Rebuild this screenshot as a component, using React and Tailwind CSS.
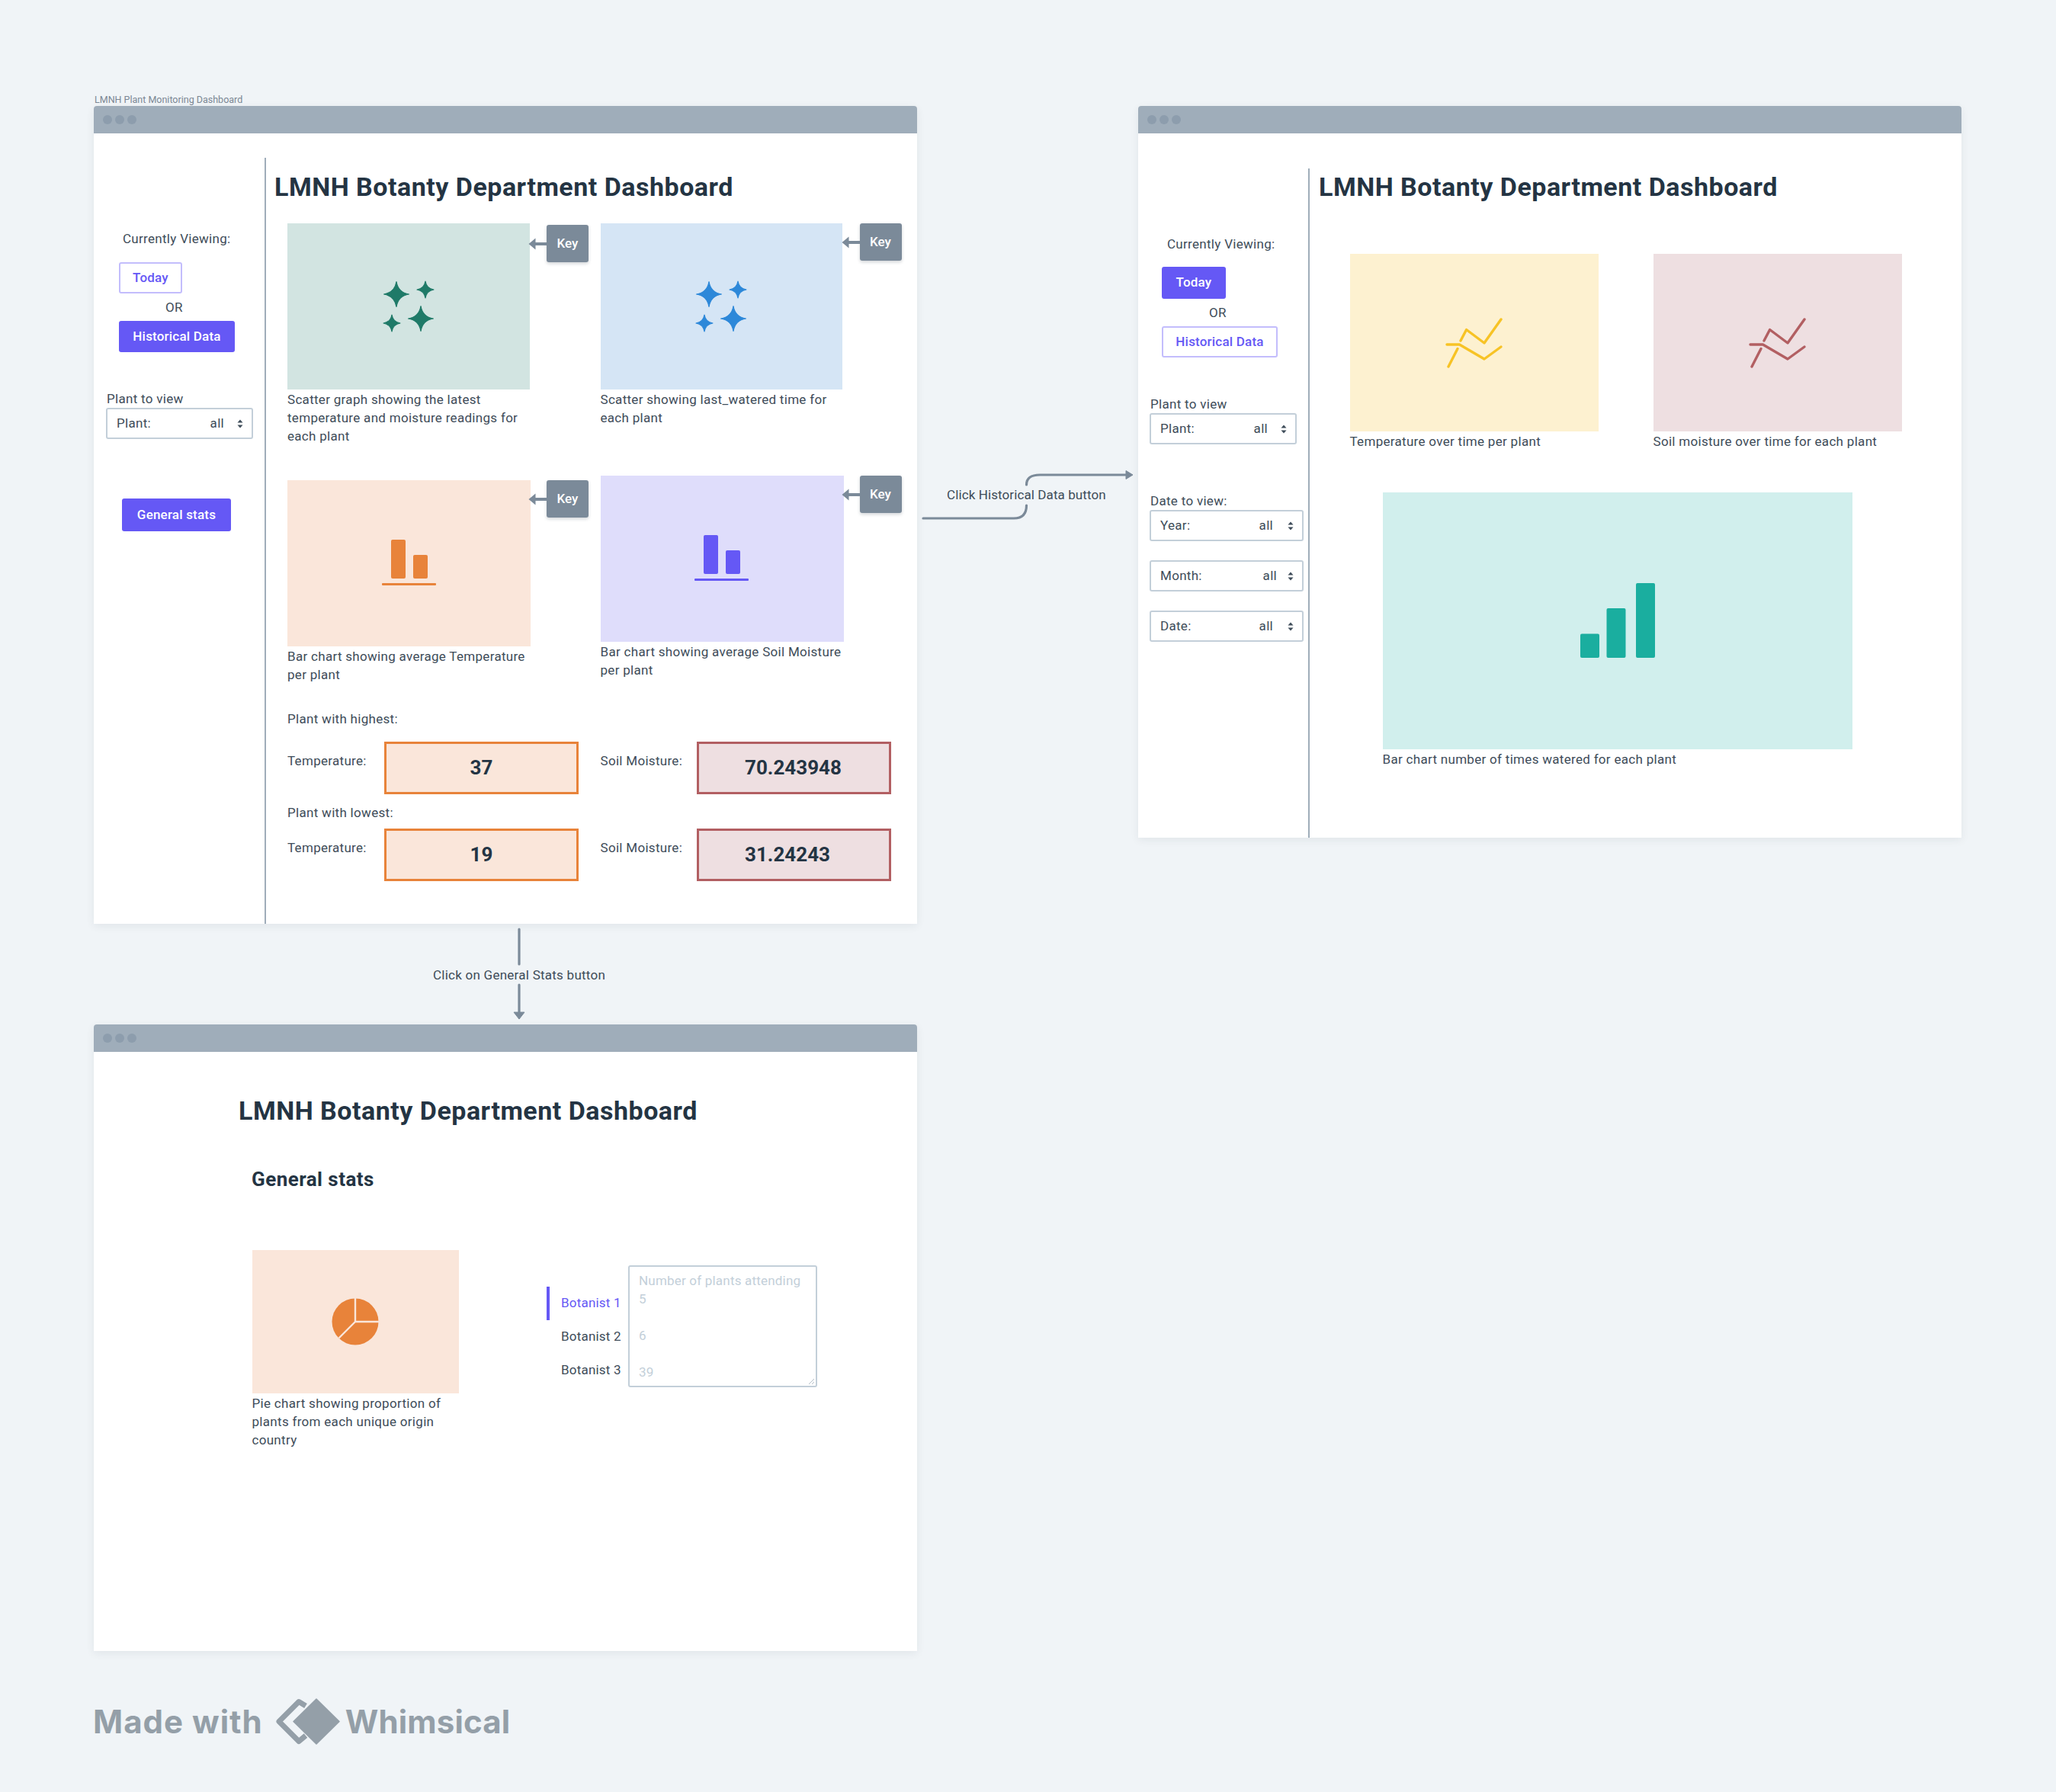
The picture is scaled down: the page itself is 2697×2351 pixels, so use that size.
import React from "react";

const Star = ({ cx, cy, r, fill }) => {
  const k = 0.14 * r;
  return (
    <path
      d={`M${cx} ${cy - r} Q${cx + k} ${cy - k} ${cx + r} ${cy} Q${cx + k} ${cy + k} ${cx} ${cy + r} Q${cx - k} ${cy + k} ${cx - r} ${cy} Q${cx - k} ${cy - k} ${cx} ${cy - r}Z`}
      fill={fill}
      stroke={fill}
      strokeWidth="1.2"
      strokeLinejoin="round"
    />
  );
};

const Sparkles = ({ color }) => (
  <svg width="68" height="68" viewBox="0 0 68 68">
    <Star cx={18} cy={18} r={16.5} fill={color} />
    <Star cx={56} cy={12} r={11} fill={color} />
    <Star cx={12} cy={56} r={11} fill={color} />
    <Star cx={50} cy={50} r={16.5} fill={color} />
  </svg>
);

const Bars2 = ({ color }) => (
  <svg width="72" height="62" viewBox="0 0 72 62">
    <rect x="12" y="0" width="19" height="51" rx="2" fill={color} />
    <rect x="41" y="20" width="19" height="31" rx="2" fill={color} />
    <rect x="0" y="57" width="71" height="3" rx="1" fill={color} />
  </svg>
);

const LineIcon = ({ color }) => (
  <svg width="76" height="66" viewBox="0 0 76 66" fill="none" stroke={color} strokeWidth="3.4" strokeLinecap="round" strokeLinejoin="round" className="mt-[2px]">
    <path d="M4 64L16 40.5" />
    <path d="M20 30L27.6 15.5L51 33L73 2" />
    <path d="M2 35H18.5L51 54L73 38" />
  </svg>
);

const UpDown = () => (
  <svg width="8" height="12" viewBox="0 0 8 12" fill="#3e4c59" className="shrink-0">
    <path d="M4 0.5L7.5 4.5H0.5Z" />
    <path d="M4 11.5L7.5 7.5H0.5Z" />
  </svg>
);

const Select = ({ label, className, gap }) => (
  <div className={`flex h-[41px] items-center rounded-[3px] border-2 border-[#c3cfd9] bg-white pl-[12px] pr-[11px] text-[17px] tracking-[0.3px] text-[#3e4c59] ${className}`}>
    <span>{label}</span>
    <span className={`ml-auto ${gap}`}>all</span>
    <UpDown />
  </div>
);

const Key = ({ className }) => (
  <div className={`relative flex h-[49px] w-[55px] shrink-0 items-center justify-center rounded-[3px] bg-[#7b8a99] text-[17px] font-medium text-white shadow-[0_2px_4px_rgba(31,45,61,0.2)] ${className}`}>
    <svg width="24" height="16" viewBox="0 0 24 16" className="absolute right-full top-[17px]">
      <path d="M24 8H8" stroke="#7b8a99" strokeWidth="4" />
      <path d="M0.5 8L9.5 0.5V15.5Z" fill="#7b8a99" />
    </svg>
    Key
  </div>
);

const Caption = ({ children, className = "" }) => (
  <p className={`text-[17px] leading-[24px] tracking-[0.3px] text-[#3e4c59] ${className}`}>{children}</p>
);

const Title = ({ className }) => (
  <h1 className={`whitespace-nowrap text-[34px] font-bold leading-[40px] tracking-[0.5px] text-[#243443] ${className}`}>
    LMNH Botanty Department Dashboard
  </h1>
);

const Win = ({ className, children }) => (
  <div className={`absolute flex w-[1080px] flex-col rounded-t-[4px] bg-white shadow-[0_3px_12px_rgba(31,45,61,0.07)] ${className}`}>
    <div className="flex h-[36px] shrink-0 items-center gap-[4px] rounded-t-[4px] bg-[#9fadba] pl-[12px]">
      <span className="h-[12px] w-[12px] rounded-full bg-[#8d9dad]" />
      <span className="h-[12px] w-[12px] rounded-full bg-[#8d9dad]" />
      <span className="h-[12px] w-[12px] rounded-full bg-[#8d9dad]" />
    </div>
    {children}
  </div>
);

const Solid = ({ className, children }) => (
  <div className={`flex items-center justify-center rounded-[3px] bg-[#6558f5] text-[17px] font-medium tracking-[0.2px] text-white ${className}`}>{children}</div>
);
const Outline = ({ className, children }) => (
  <div className={`flex items-center justify-center rounded-[3px] border-2 border-[#c3bdfc] bg-white text-[17px] font-medium tracking-[0.2px] text-[#6558f5] ${className}`}>{children}</div>
);

const StatBox = ({ value, className }) => (
  <div className={`flex h-[69px] w-[255px] items-center border-[3px] text-[26px] font-bold text-[#243443] ${className}`}>{value}</div>
);

const StatRow = ({ t, m }) => (
  <div className="grid grid-cols-[410.5px_1fr]">
    <div className="flex">
      <Caption className="w-[126.5px] pt-[13px]">Temperature:</Caption>
      <StatBox value={t} className="border-[#e8833a] bg-[#fae6da] pl-[110px]" />
    </div>
    <div className="flex">
      <Caption className="w-[126.5px] pt-[13px]">Soil Moisture:</Caption>
      <StatBox value={m} className="border-[#b25f62] bg-[#eedfe1] pl-[60px]" />
    </div>
  </div>
);

export default function App() {
  return (
    <div className="relative h-[2351px] w-[2697px] overflow-hidden bg-[#f0f4f7] font-['Roboto',sans-serif]">
      <p className="absolute left-[124px] top-[122px] text-[12.5px] leading-[18px] text-[#7b8794]">LMNH Plant Monitoring Dashboard</p>

      {/* Window 1 */}
      <Win className="left-[123px] top-[139px] h-[1073px]">
        <div className="flex flex-1 pt-[32px]">
          <aside className="w-[226px] shrink-0 border-r-2 border-[#9fadba]">
            <Caption className="ml-[38px] mt-[94px]">Currently Viewing:</Caption>
            <Outline className="ml-[33px] mt-[19px] h-[41px] w-[83px]">Today</Outline>
            <Caption className="ml-[94px] mt-[6px]">OR</Caption>
            <Solid className="ml-[33px] mt-[6px] h-[41px] w-[152px]">Historical Data</Solid>
            <Caption className="ml-[17px] mt-[49px]">Plant to view</Caption>
            <Select label="Plant:" className="ml-[16px] w-[193px]" gap="mr-[17px]" />
            <Solid className="ml-[37px] mt-[78px] h-[43px] w-[143px]">General stats</Solid>
          </aside>
          <main className="flex-1">
            <Title className="ml-[11px] mt-[18px]" />
            <div className="ml-[28px] mt-[28px] grid grid-cols-[410.5px_1fr]">
              <div className="flex h-[331px] items-start">
                <div className="w-[318px]">
                  <div className="flex h-[218px] items-center justify-center bg-[#d2e4e1]">
                    <Sparkles color="#1f7a68" />
                  </div>
                  <Caption className="mt-[1px]">Scatter graph showing the latest temperature and moisture readings for each plant</Caption>
                </div>
                <Key className="ml-[22px] mt-[2px]" />
              </div>
              <div className="flex h-[331px] items-start">
                <div className="w-[317px]">
                  <div className="flex h-[218px] items-center justify-center bg-[#d5e5f5]">
                    <Sparkles color="#2d88d9" />
                  </div>
                  <Caption className="mt-[1px]">Scatter showing last_watered time for each plant</Caption>
                </div>
                <Key className="ml-[23px]" />
              </div>
              <div className="flex h-[306.5px] items-start pt-[6px]">
                <div className="w-[319px]">
                  <div className="flex h-[218px] items-center justify-center bg-[#fae6da]">
                    <Bars2 color="#e8833a" />
                  </div>
                  <Caption className="mt-[1px]">Bar chart showing average Temperature per plant</Caption>
                </div>
                <Key className="ml-[21px]" />
              </div>
              <div className="flex h-[306.5px] items-start">
                <div className="w-[319px]">
                  <div className="flex h-[218px] items-center justify-center bg-[#dfddfb]">
                    <Bars2 color="#6558f5" />
                  </div>
                  <Caption className="mt-[1px]">Bar chart showing average Soil Moisture per plant</Caption>
                </div>
                <Key className="ml-[21px]" />
              </div>
            </div>
            <div className="ml-[28px]">
              <Caption>Plant with highest:</Caption>
              <div className="mt-[18px]"><StatRow t="37" m="70.243948" /></div>
              <Caption className="mt-[12.5px]">Plant with lowest:</Caption>
              <div className="mt-[8.5px]"><StatRow t="19" m="31.24243" /></div>
            </div>
          </main>
        </div>
      </Win>

      {/* Window 2 */}
      <Win className="left-[1493px] top-[139px] h-[960px]">
        <div className="flex flex-1 pt-[46px]">
          <aside className="w-[225px] shrink-0 border-r-2 border-[#9fadba]">
            <Caption className="ml-[38px] mt-[87px]">Currently Viewing:</Caption>
            <Solid className="ml-[31px] mt-[18px] h-[42px] w-[84px]">Today</Solid>
            <Caption className="ml-[93px] mt-[6px]">OR</Caption>
            <Outline className="ml-[31px] mt-[6px] h-[41px] w-[152px]">Historical Data</Outline>
            <Caption className="ml-[16px] mt-[49px]">Plant to view</Caption>
            <Select label="Plant:" className="ml-[15px] w-[193px]" gap="mr-[17px]" />
            <Caption className="ml-[16px] mt-[62px]">Date to view:</Caption>
            <Select label="Year:" className="ml-[15px] w-[202px]" gap="mr-[19px]" />
            <Select label="Month:" className="ml-[15px] mt-[25px] w-[202px]" gap="mr-[14px]" />
            <Select label="Date:" className="ml-[15px] mt-[25px] w-[202px]" gap="mr-[19px]" />
          </aside>
          <main className="flex-1">
            <Title className="ml-[12px] mt-[4px]" />
            <div className="ml-[52.5px] mt-[67.5px]">
              <div className="grid grid-cols-[398px_1fr]">
                <div className="w-[326.5px]">
                  <div className="flex h-[233.5px] items-center justify-center bg-[#fdf1d0]">
                    <LineIcon color="#f7c325" />
                  </div>
                  <Caption className="mt-[1px]">Temperature over time per plant</Caption>
                </div>
                <div className="w-[326.5px]">
                  <div className="flex h-[233.5px] items-center justify-center bg-[#eedfe1]">
                    <LineIcon color="#b25f62" />
                  </div>
                  <Caption className="mt-[1px]">Soil moisture over time for each plant</Caption>
                </div>
              </div>
              <div className="ml-[43px] mt-[54.5px] w-[616.5px]">
                <div className="flex h-[337.5px] items-center justify-center bg-[#d1efed]">
                  <svg width="98" height="98" viewBox="0 0 98 98">
                    <rect x="0" y="66.5" width="25" height="31.5" rx="2" fill="#1aae9f" />
                    <rect x="34.5" y="33" width="25" height="65" rx="2" fill="#1aae9f" />
                    <rect x="73" y="0" width="25" height="98" rx="2" fill="#1aae9f" />
                  </svg>
                </div>
                <Caption className="mt-[1px]">Bar chart number of times watered for each plant</Caption>
              </div>
            </div>
          </main>
        </div>
      </Win>

      {/* Window 3 */}
      <Win className="left-[123px] top-[1344px] h-[822px]">
        <Title className="ml-[190px] mt-[57px]" />
        <h2 className="ml-[207px] mt-[54px] text-[26px] font-bold leading-[32px] tracking-[0.45px] text-[#243443]">General stats</h2>
        <div className="ml-[207.5px] mt-[77px] flex items-start">
          <div className="w-[271px]">
            <div className="flex h-[188px] items-center justify-center bg-[#fae6da]">
              <svg width="62" height="62" viewBox="0 0 62 62">
                <circle cx="31" cy="31" r="30.5" fill="#e8833a" />
                <path d="M31 0V31H62M31 31L9.5 52.5" fill="none" stroke="#fae6da" strokeWidth="2.4" />
              </svg>
            </div>
            <Caption className="mt-[1px]">Pie chart showing proportion of plants from each unique origin country</Caption>
          </div>
          <div className="ml-[115.5px] mt-[48px] w-[107px] text-[17px] tracking-[0.2px] text-[#3e4c59]">
            <div className="flex h-[44px] items-center border-l-4 border-[#6558f5] pl-[15px] text-[#6558f5]">Botanist 1</div>
            <div className="flex h-[44px] items-center pl-[19px]">Botanist 2</div>
            <div className="flex h-[44px] items-center pl-[19px]">Botanist 3</div>
          </div>
          <div className="relative mt-[20px] h-[160px] w-[248px] rounded-[3px] border-2 border-[#c3cfd9] bg-white pl-[12px] pt-[6px] text-[17px] leading-[24px] tracking-[0.2px] text-[#c3cfd9]">
            <div>Number of plants attending</div>
            <div>5</div>
            <div className="h-[24px]" />
            <div>6</div>
            <div className="h-[24px]" />
            <div>39</div>
            <svg width="9" height="9" viewBox="0 0 9 9" className="absolute bottom-[1px] right-[1px]" stroke="#9fadba" strokeWidth="0.8">
              <path d="M1 8L8 1M5 8L8 5" />
            </svg>
          </div>
        </div>
      </Win>

      {/* Connectors on the board */}
      <svg width="300" height="70" viewBox="0 0 300 70" fill="none" className="absolute left-[1200px] top-[615px]">
        <path d="M11 65H130Q146.5 65 146.5 48" stroke="#7b8a99" strokeWidth="3.2" strokeLinecap="round" />
        <path d="M146.5 21Q146.5 8 164 8H280" stroke="#7b8a99" strokeWidth="3.2" strokeLinecap="round" />
        <path d="M286 8L277 2.5V13.5Z" fill="#7b8a99" stroke="#7b8a99" strokeLinejoin="round" />
      </svg>
      <p className="absolute left-[1242px] top-[637px] text-[17px] leading-[24px] tracking-[0.1px] text-[#3e4c59]">Click Historical Data button</p>

      <svg width="20" height="122" viewBox="0 0 20 122" fill="none" className="absolute left-[671px] top-[1217px]">
        <path d="M10 2V48" stroke="#7b8a99" strokeWidth="3.2" strokeLinecap="round" />
        <path d="M10 75V114" stroke="#7b8a99" strokeWidth="3.2" strokeLinecap="round" />
        <path d="M10 120L3 111H17Z" fill="#7b8a99" stroke="#7b8a99" strokeLinejoin="round" />
      </svg>
      <p className="absolute left-[568px] top-[1267px] text-[17px] leading-[24px] tracking-[0.25px] text-[#3e4c59]">Click on General Stats button</p>

      {/* Footer */}
      <div className="absolute left-[122px] top-[2228px] flex h-[61px] items-center font-['Inter',sans-serif] text-[42px] font-bold text-[#949fa8]">
        <span className="tracking-[1px]">Made with</span>
        <svg width="85" height="61" viewBox="0 0 85 61" className="ml-[16px] mr-[7px] shrink-0">
          <path d="M40 10L31 4.5L5 30.5L31 56.5L40 49" fill="none" stroke="#949fa8" strokeWidth="7" strokeLinejoin="round" />
          <path d="M54 1L84 30.5L54 60L24 30.5Z" fill="#949fa8" stroke="#949fa8" strokeWidth="1.5" strokeLinejoin="round" />
        </svg>
        <span className="tracking-[0.15px]">Whimsical</span>
      </div>
    </div>
  );
}
